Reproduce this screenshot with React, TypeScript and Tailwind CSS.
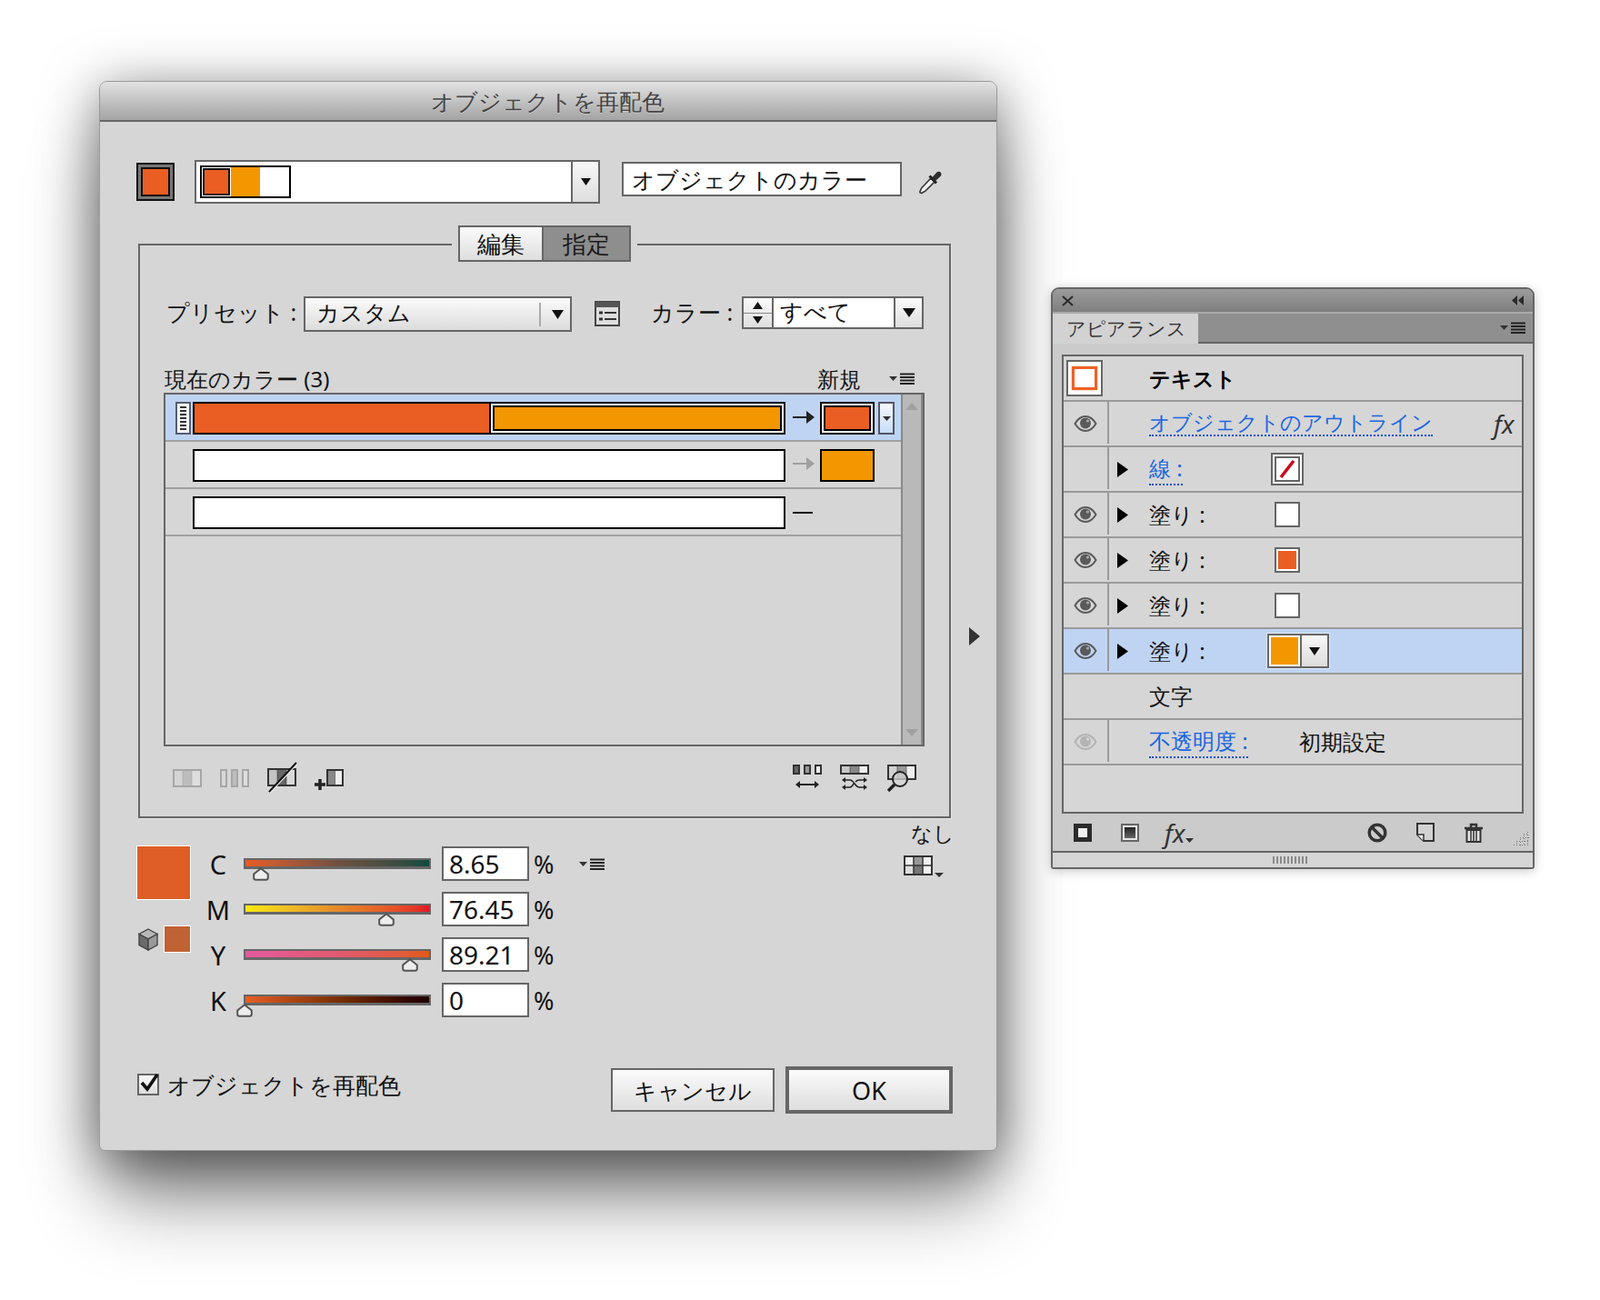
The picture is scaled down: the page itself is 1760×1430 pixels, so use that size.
import React from 'react'

const ORANGE = '#ea5e23'
const AMBER = '#f39700'

function Tri({ dir = 'down', w = 14, h = 10, color = '#111' }: { dir?: string; w?: number; h?: number; color?: string }) {
  const pts =
    dir === 'down' ? `0,0 ${w},0 ${w / 2},${h}` :
    dir === 'up' ? `0,${h} ${w},${h} ${w / 2},0` :
    dir === 'left' ? `${w},0 ${w},${h} 0,${h / 2}` :
    `0,0 ${w},${h / 2} 0,${h}`
  return (
    <svg width={w} height={h} viewBox={`0 0 ${w} ${h}`} className="block shrink-0">
      <polygon points={pts} fill={color} />
    </svg>
  )
}

function MenuIcon({ className = '' }: { className?: string }) {
  return (
    <svg width="28" height="14" viewBox="0 0 28 14" className={`block shrink-0 ${className}`}>
      <polygon points="0,4 9,4 4.5,9" fill="#333" />
      <path d="M12 1.5H28M12 5H28M12 8.5H28M12 12H28" stroke="#222" strokeWidth="2" />
    </svg>
  )
}

function Eye({ faded = false }: { faded?: boolean }) {
  const c = faded ? '#b4b4b4' : '#5a5a5a'
  return (
    <svg width="26" height="20" viewBox="0 0 26 20" className="block">
      <path d="M1.5 10C5 4 9.5 2 13 2S21 4 24.5 10C21 16 16.5 18 13 18S5 16 1.5 10Z" fill="none" stroke={c} strokeWidth="2" />
      <circle cx="13" cy="9.5" r="6" fill={c} />
      <circle cx="15.5" cy="7" r="1.6" fill={faded ? '#d6d6d6' : '#a8a8a8'} />
    </svg>
  )
}

function Eyedropper() {
  return (
    <svg width="26" height="27" viewBox="0 0 26 27" className="block">
      <path d="M14 9L4 19.5C3 20.5 3 22 2 23.5C1.5 25 3 26 4.5 25C6 24 7 24 8 23L18 13Z" fill="#f2f2f2" stroke="#333" strokeWidth="1.6" />
      <path d="M12.5 6.5L20 14.5" stroke="#222" strokeWidth="3" />
      <path d="M15.5 8L20 3C21.5 1.2 24 1.5 25 3S25.5 6 24 7.5L19 12Z" fill="#2e2e2e" />
    </svg>
  )
}

function Cells({ x, y, w, h, fills, stroke = '#333' }: { x: number; y: number; w: number; h: number; fills: string[]; stroke?: string }) {
  const cw = w / fills.length
  return (
    <g>
      {fills.map((f, i) => (
        <rect key={i} x={x + i * cw} y={y} width={cw} height={h} fill={f} />
      ))}
      {fills.slice(1).map((_, i) => (
        <path key={i} d={`M${x + (i + 1) * cw} ${y}V${y + h}`} stroke={stroke} strokeWidth="1" opacity="0.6" />
      ))}
      <rect x={x} y={y} width={w} height={h} fill="none" stroke={stroke} strokeWidth="2" />
    </g>
  )
}

function ListIcon() {
  return (
    <svg width="28" height="28" viewBox="0 0 28 28" className="block shrink-0">
      <rect x="1" y="1" width="26" height="26" fill="#dedede" stroke="#444" strokeWidth="2" />
      <rect x="1" y="1" width="26" height="6" fill="#555" />
      <path d="M5 13H9M5 20H9" stroke="#333" strokeWidth="3" />
      <path d="M11 13H24M11 20H24" stroke="#333" strokeWidth="2" />
    </svg>
  )
}

function MergeOff() {
  return (
    <svg width="32" height="20" viewBox="0 0 32 20" className="block">
      <Cells x={1} y={1} w={30} h={18} fills={['#d4d4d4', '#bdbdbd', '#dedede']} stroke="#a6a6a6" />
    </svg>
  )
}

function SplitOff() {
  return (
    <svg width="32" height="20" viewBox="0 0 32 20" className="block">
      <rect x="1" y="1" width="6" height="18" fill="#d8d8d8" stroke="#a6a6a6" strokeWidth="2" />
      <rect x="13" y="1" width="6" height="18" fill="#bdbdbd" stroke="#a6a6a6" strokeWidth="2" />
      <rect x="25" y="1" width="6" height="18" fill="#dedede" stroke="#a6a6a6" strokeWidth="2" />
    </svg>
  )
}

function NoCells() {
  return (
    <svg width="34" height="34" viewBox="0 0 34 34" className="block">
      <Cells x={1} y={8} w={30} h={18} fills={['#c4c4c4', '#666', '#d8d8d8']} stroke="#333" />
      <path d="M32 1L2 33" stroke="#f4f4f4" strokeWidth="1.5" transform="translate(1 1)" />
      <path d="M32 1L2 33" stroke="#111" strokeWidth="2" />
    </svg>
  )
}

function AddCell() {
  return (
    <svg width="32" height="24" viewBox="0 0 32 24" className="block">
      <Cells x={14} y={1} w={17} h={17} fills={['#888', '#eee']} stroke="#333" />
      <path d="M6 11V23M0 17H12" stroke="#222" strokeWidth="3.5" />
    </svg>
  )
}

function ArrangeIcon() {
  return (
    <svg width="32" height="31" viewBox="0 0 32 31" className="block">
      <rect x="1" y="1" width="6" height="9" fill="#666" stroke="#333" strokeWidth="2" />
      <rect x="13" y="1" width="6" height="9" fill="#999" stroke="#333" strokeWidth="2" />
      <rect x="25" y="1" width="6" height="9" fill="#f0f0f0" stroke="#333" strokeWidth="2" />
      <path d="M6 22H26" stroke="#222" strokeWidth="2" />
      <polygon points="3,22 8,18 8,26" fill="#222" />
      <polygon points="29,22 24,18 24,26" fill="#222" />
    </svg>
  )
}

function ShuffleIcon() {
  return (
    <svg width="32" height="31" viewBox="0 0 32 31" className="block">
      <Cells x={1} y={1} w={30} h={9} fills={['#c8c8c8', '#888', '#eee']} stroke="#333" />
      <path d="M5 17H11C15 17 17 25 21 25H27M5 25H11C13 25 14 23 15 21M17 19C18 18 19 17 21 17H27" fill="none" stroke="#222" strokeWidth="1.6" />
      <polygon points="2,17 6,14 6,20" fill="#222" />
      <polygon points="2,25 6,22 6,28" fill="#222" />
      <polygon points="30,17 26,14 26,20" fill="#222" />
      <polygon points="30,25 26,22 26,28" fill="#222" />
    </svg>
  )
}

function FinderIcon() {
  return (
    <svg width="32" height="31" viewBox="0 0 32 31" className="block">
      <Cells x={1} y={1} w={30} h={15} fills={['#d0d0d0', '#999', '#eee']} stroke="#333" />
      <circle cx="14" cy="16" r="8" fill="#d6d6d6" fillOpacity="0.75" stroke="#222" strokeWidth="2" />
      <path d="M8 22L1 29" stroke="#222" strokeWidth="3.5" />
    </svg>
  )
}

function GridIcon() {
  return (
    <svg width="44" height="24" viewBox="0 0 44 24" className="block">
      <rect x="1" y="1" width="10" height="10" fill="#f0f0f0" />
      <rect x="11" y="1" width="10" height="10" fill="#999" />
      <rect x="21" y="1" width="10" height="10" fill="#f0f0f0" />
      <rect x="1" y="11" width="10" height="10" fill="#dedede" />
      <rect x="11" y="11" width="10" height="10" fill="#777" />
      <rect x="21" y="11" width="10" height="10" fill="#f0f0f0" />
      <path d="M1 11H31M11 1V21M21 1V21" stroke="#333" strokeWidth="1.5" />
      <rect x="1" y="1" width="30" height="20" fill="none" stroke="#333" strokeWidth="2" />
      <polygon points="34,19 44,19 39,24" fill="#333" />
    </svg>
  )
}

function Cube() {
  return (
    <svg width="22" height="25" viewBox="0 0 22 25" className="block">
      <polygon points="11,1 21,6.5 11,12 1,6.5" fill="#b8b8b8" stroke="#444" strokeWidth="1.4" />
      <polygon points="1,6.5 11,12 11,24 1,18.5" fill="#6a6a6a" stroke="#444" strokeWidth="1.4" />
      <polygon points="21,6.5 11,12 11,24 21,18.5" fill="#9a9a9a" stroke="#444" strokeWidth="1.4" />
    </svg>
  )
}

function Thumb({ left }: { left: string }) {
  return (
    <svg width="18" height="15" viewBox="0 0 18 15" className={`absolute top-[8px] ${left}`}>
      <path d="M9 1.2L16.8 7.5V11.5C16.8 13 16 13.8 14.5 13.8H3.5C2 13.8 1.2 13 1.2 11.5V7.5Z" fill="#eeeeee" stroke="#555" strokeWidth="2" />
    </svg>
  )
}

function SliderRow({ label, value, gradient, thumb }: { label: string; value: string; gradient: string; thumb: string }) {
  return (
    <div className="flex h-[38px] items-start">
      <div className="flex h-[38px] w-[40px] items-center justify-center text-[29px] leading-none text-[#111]">{label}</div>
      <div className="relative ml-[8px] mt-[13px] h-[12px] w-[206px] border-2 border-b-[3px] border-[#666]">
        <div className={`h-full w-full ${gradient}`} />
        <Thumb left={thumb} />
      </div>
      <div className="ml-[12px] flex h-[38px] w-[96px] items-center border-2 border-[#666] bg-white pl-[6px] text-[28px] leading-none text-[#111]">{value}</div>
      <div className="ml-[5px] flex h-[38px] items-center text-[27px] leading-none text-[#111]">%</div>
    </div>
  )
}

function Grip() {
  return (
    <div className="mr-[2px] flex h-[36px] w-[17px] flex-col items-center justify-center gap-[2px] border-2 border-[#555d70] bg-[#f2f5fb]">
      {[0, 1, 2, 3, 4, 5, 6].map((i) => (
        <div key={i} className="h-[2px] w-[7px] bg-[#333]" />
      ))}
    </div>
  )
}

function BarPair() {
  return (
    <div className="flex h-[36px] w-[652px] border-2 border-black">
      <div className="w-[324px]" style={{ background: ORANGE }} />
      <div className="w-[2px] bg-black" />
      <div className="flex-1 border-2 border-white">
        <div className="h-full border-2 border-black" style={{ background: AMBER }} />
      </div>
    </div>
  )
}

function ColorRows() {
  return (
    <div className="flex h-[385px] w-[809px] flex-col">
      <div className="flex h-[52px] items-start border-b-2 border-[#a0a0a0] bg-[#bfd4f3] pl-[11px] pt-[8px]">
        <Grip />
        <BarPair />
        <svg width="24" height="14" viewBox="0 0 24 14" className="ml-[8px] mt-[10px] block shrink-0">
          <path d="M0 7H17" stroke="#222" strokeWidth="2" />
          <polygon points="15,0 24,7 15,14" fill="#222" />
        </svg>
        <div className="ml-[6px] h-[36px] w-[60px] border-2 border-black bg-white p-[2px]">
          <div className="h-full border-2 border-black" style={{ background: ORANGE }} />
        </div>
        <div className="ml-[4px] flex h-[36px] w-[18px] items-center justify-center border-2 border-[#556] bg-linear-to-b from-[#f6f9ff] to-[#c8dcf8]">
          <Tri w={9} h={5} color="#333" />
        </div>
      </div>
      <div className="flex h-[52px] items-start border-b-2 border-[#a0a0a0] pl-[30px] pt-[8px]">
        <div className="h-[36px] w-[652px] border-2 border-black bg-white" />
        <svg width="24" height="14" viewBox="0 0 24 14" className="ml-[8px] mt-[9px] block shrink-0">
          <path d="M0 7H17" stroke="#a0a0a0" strokeWidth="2" />
          <polygon points="15,0 24,7 15,14" fill="#a0a0a0" />
        </svg>
        <div className="ml-[6px] h-[36px] w-[60px] border-2 border-black" style={{ background: AMBER }} />
      </div>
      <div className="flex h-[52px] items-start border-b-2 border-[#a0a0a0] pl-[30px] pt-[8px]">
        <div className="h-[36px] w-[652px] border-2 border-black bg-white" />
        <div className="ml-[8px] mt-[17px] h-[2px] w-[22px] bg-[#111]" />
      </div>
    </div>
  )
}

function Dialog() {
  return (
    <div className="mt-[89px] flex h-[1177px] w-[988px] shrink-0 flex-col rounded-t-[9px] rounded-b-[6px] border border-[#9a9a9a] bg-[#d6d6d6] shadow-[0_10px_60px_rgba(0,0,0,0.5),0_62px_80px_-10px_rgba(0,0,0,0.45)]">
      <div className="flex h-[44px] shrink-0 items-center justify-center rounded-t-[8px] border-b-2 border-[#666] bg-linear-to-b from-[#e2e2e2] to-[#a4a4a4] pr-[2px] text-[25px] leading-none text-[#444] [text-shadow:0_1px_0_rgba(255,255,255,0.35)]">
        オブジェクトを再配色
      </div>

      {/* top row */}
      <div className="ml-[40px] mt-[42px] flex h-[48px] items-center">
        <div className="h-[42px] w-[42px] border-2 border-[#111] bg-[#777] p-[3px]">
          <div className="h-full border-2 border-[#111]" style={{ background: ORANGE }} />
        </div>
        <div className="ml-[22px] flex h-[48px] w-[446px] border-2 border-[#666]">
          <div className="flex-1 bg-white pl-[4px] pt-[4px]">
            <div className="flex h-[36px] w-[100px] border-2 border-black">
              <div className="w-[32px] bg-white p-[1px]">
                <div className="h-full border-2 border-[#111]" style={{ background: ORANGE }} />
              </div>
              <div className="w-[32px]" style={{ background: AMBER }} />
              <div className="flex-1 bg-white" />
            </div>
          </div>
          <div className="flex w-[30px] items-center justify-center border-l-2 border-[#666] bg-linear-to-b from-[#f8f8f8] to-[#dedede]">
            <Tri w={11} h={8} />
          </div>
        </div>
        <div className="ml-[24px] mt-[2px] flex h-[38px] w-[308px] items-center self-start border-2 border-[#666] bg-white pl-[9px] text-[25px] leading-none text-[#111]">
          オブジェクトのカラー
        </div>
        <div className="ml-[18px] mt-[11px] self-start">
          <Eyedropper />
        </div>
      </div>

      {/* group box */}
      <div className="ml-[42px] mt-[44px] flex shrink-0 items-start">
        <div className="relative h-[632px] w-[894px] shrink-0 border-2 border-[#666] shadow-[1px_1px_0_rgba(255,255,255,0.35)]">
          <div className="absolute left-[343px] top-[-22px] flex h-[42px] bg-[#d6d6d6] px-[7px]">
            <div className="flex h-[40px] w-[94px] items-center justify-center border-2 border-[#666] bg-linear-to-b from-[#fbfbfb] to-[#dedede] text-[26px] leading-none text-[#111]">編集</div>
            <div className="flex h-[40px] w-[96px] items-center justify-center border-2 border-l-0 border-[#666] bg-[#8e8e8e] text-[26px] leading-none text-[#1a1a1a]">指定</div>
          </div>

          <div className="ml-[29px] mt-[56px] flex h-[39px] items-start">
            <div className="flex h-[39px] w-[151px] shrink-0 items-center whitespace-nowrap pb-[5px] text-[25px] leading-none text-[#111]">プリセット :</div>
            <div className="flex h-[39px] w-[295px] items-center border-2 border-[#666] bg-linear-to-b from-[#fbfbfb] to-[#dcdcdc] pl-[12px] text-[25px] leading-none text-[#111]">
              <span className="w-[245px] pb-[5px]">カスタム</span>
              <div className="h-[26px] w-[2px] bg-[#aaa]" />
              <div className="ml-[12px]"><Tri w={13} h={10} /></div>
            </div>
            <div className="ml-[25px] mt-[5px]"><ListIcon /></div>
            <div className="ml-[34px] flex h-[39px] w-[100px] shrink-0 items-center whitespace-nowrap pb-[5px] text-[25px] leading-none text-[#111]">カラー :</div>
            <div className="flex h-[36px] w-[200px] border-2 border-[#666] bg-white">
              <div className="flex w-[33px] flex-col border-r-2 border-[#666] bg-linear-to-b from-[#fafafa] to-[#dedede]">
                <div className="flex flex-1 items-center justify-center border-b border-[#888]"><Tri dir="up" w={11} h={8} /></div>
                <div className="flex flex-1 items-center justify-center"><Tri w={11} h={8} /></div>
              </div>
              <div className="flex flex-1 items-center pb-[4px] pl-[7px] text-[25px] leading-none text-[#111]">すべて</div>
              <div className="flex w-[31px] items-center justify-center border-l-2 border-[#666] bg-linear-to-b from-[#fafafa] to-[#dedede]"><Tri w={14} h={10} /></div>
            </div>
          </div>

          <div className="ml-[26px] mt-[36px] flex h-[31px] w-[837px] items-center whitespace-nowrap text-[24px] leading-none text-[#111]">
            <span className="ml-[1px] w-[718px] shrink-0">現在のカラー (3)</span>
            <span className="shrink-0">新規</span>
            <MenuIcon className="ml-[31px]" />
          </div>

          <div className="ml-[26px] flex h-[389px] w-[837px] border-2 border-[#666]">
            <ColorRows />
            <div className="flex w-[24px] flex-col items-center justify-between border-x-2 border-[#8a8a8a] bg-[#b9b9b9] py-[9px]">
              <Tri dir="up" w={14} h={8} color="#a0a0a0" />
              <Tri w={14} h={8} color="#a0a0a0" />
            </div>
          </div>

          <div className="ml-[36px] mt-[18px] flex h-[34px] w-[818px] items-center">
            <MergeOff />
            <div className="ml-[20px]"><SplitOff /></div>
            <div className="mb-[2px] ml-[20px]"><NoCells /></div>
            <div className="ml-[18px] mt-[4px]"><AddCell /></div>
            <div className="ml-auto flex gap-[20px]">
              <ArrangeIcon />
              <ShuffleIcon />
              <FinderIcon />
            </div>
          </div>
        </div>
        {/* side arrow that opens the colour wheel */}
        <div className="ml-[20px] mt-[422px]">
          <Tri dir="right" w={12} h={20} color="#333" />
        </div>
      </div>

      {/* colour sliders */}
      <div className="flex h-[223px] items-start">
        <div className="ml-[40px] mt-[30px] flex w-[60px] shrink-0 flex-col">
          <div className="h-[60px] w-[60px] border border-white bg-[#df5e26]" />
          <div className="mt-[28px] flex items-center justify-between">
            <div className="ml-[2px]"><Cube /></div>
            <div className="h-[30px] w-[30px] border border-white bg-[#c06234]" />
          </div>
        </div>
        <div className="ml-[10px] mt-[31px] flex flex-col gap-[12px]">
          <SliderRow label="C" value="8.65" gradient="bg-linear-to-r from-[#ea5c22] via-[#705040] to-[#0d4a40]" thumb="left-[8px]" />
          <SliderRow label="M" value="76.45" gradient="bg-linear-to-r from-[#f6ea0c] via-[#e58a2a] to-[#e31626]" thumb="left-[146px]" />
          <SliderRow label="Y" value="89.21" gradient="bg-linear-to-r from-[#e35a9c] via-[#e25a70] to-[#e2590f]" thumb="left-[172px]" />
          <SliderRow label="K" value="0" gradient="bg-linear-to-r from-[#e85f26] via-[#7a3000] to-[#1e0000]" thumb="left-[-10px]" />
        </div>
        <MenuIcon className="ml-[28px] mt-[44px]" />
        <div className="ml-[337px] mt-[4px] flex w-[52px] flex-col">
          <div className="flex h-[24px] items-center whitespace-nowrap text-[23px] leading-none text-[#111]">なし</div>
          <div className="ml-[-8px] mt-[13px]"><GridIcon /></div>
        </div>
      </div>

      {/* bottom row */}
      <div className="ml-[41px] mt-[50px] flex h-[52px] items-start">
        <div className="mt-[8px] flex h-[24px] w-[521px] items-center">
          <div className="relative h-[24px] w-[24px] border-2 border-[#666] bg-linear-to-b from-[#fafafa] to-[#dcdcdc]">
            <svg width="24" height="24" viewBox="0 0 24 24" className="absolute left-[-1px] top-[-3px]">
              <path d="M4 11L10 18L21 2" fill="none" stroke="#111" strokeWidth="3.6" />
            </svg>
          </div>
          <span className="ml-[9px] whitespace-nowrap text-[25px] leading-none text-[#111]">オブジェクトを再配色</span>
        </div>
        <div className="mt-[2px] flex h-[48px] w-[180px] items-center justify-center border-2 border-[#666] bg-linear-to-b from-[#fbfbfb] to-[#dedede] text-[25px] leading-none text-[#111]">キャンセル</div>
        <div className="ml-[12px] flex h-[52px] w-[184px] items-center justify-center border-4 border-[#666] bg-linear-to-b from-[#fbfbfb] to-[#dedede] text-[27px] leading-none text-[#111]">OK</div>
      </div>
    </div>
  )
}

function Swatch({ fill }: { fill?: string }) {
  return (
    <div className="h-[28px] w-[28px] border-2 border-[#666] bg-white p-[2px]">
      <div className="h-full w-full" style={fill ? { background: fill } : undefined} />
    </div>
  )
}

function PanelRow({ eye = true, tri = true, selected = false, faded = false, children }: { eye?: boolean; tri?: boolean; selected?: boolean; faded?: boolean; children: React.ReactNode }) {
  return (
    <div className={`flex h-[50px] items-center border-b-2 border-[#9a9a9a] ${selected ? 'bg-[#bfd4f3]' : ''}`}>
      <div className="flex h-full w-[48px] items-center justify-center">{eye && <Eye faded={faded} />}</div>
      <div className="h-[46px] w-[2px] self-start bg-[#9a9a9a]" />
      <div className="flex w-[44px] items-center pl-[9px]">{tri && <Tri dir="right" w={12} h={17} color="#000" />}</div>
      {children}
    </div>
  )
}

function Nuri({ children }: { children: React.ReactNode }) {
  return (
    <>
      <div className="w-[138px] shrink-0 text-[24px] leading-none text-[#111]">塗り :</div>
      {children}
    </>
  )
}

function Panel() {
  return (
    <div className="ml-[59px] mt-[316px] flex h-[640px] w-[532px] shrink-0 flex-col rounded-t-[9px] rounded-b-[3px] border-2 border-[#666] bg-[#cbcbcb] shadow-[0_2px_12px_rgba(0,0,0,0.22)]">
      <div className="flex h-[25px] shrink-0 items-center justify-between rounded-t-[7px] bg-linear-to-b from-[#9c9c9c] to-[#7f7f7f] px-[10px]">
        <svg width="13" height="12" viewBox="0 0 13 12" className="block">
          <path d="M1 1L12 11M12 1L1 11" stroke="#2b2b2b" strokeWidth="2" />
        </svg>
        <div className="flex gap-[1px]">
          <Tri dir="left" w={6} h={11} color="#2b2b2b" />
          <Tri dir="left" w={6} h={11} color="#2b2b2b" />
        </div>
      </div>
      <div className="flex h-[35px] shrink-0 border-t-2 border-[#aaa]">
        <div className="flex w-[160px] items-center whitespace-nowrap bg-[#d2d2d2] pl-[15px] text-[21px] leading-none text-[#333]">アピアランス</div>
        <div className="flex flex-1 items-center justify-end border-b-2 border-[#666] bg-[#8f8f8f] pr-[8px]">
          <MenuIcon />
        </div>
      </div>

      <div className="ml-[10px] mt-[12px] h-[505px] w-[508px] shrink-0 border-2 border-[#666] bg-[#d6d6d6]">
        <div className="flex h-[50px] items-center border-b-2 border-[#9a9a9a]">
          <div className="ml-[3px] flex h-[40px] w-[40px] items-center justify-center border-2 border-[#666] bg-white">
            <div className="h-[26px] w-[28px] border-[3px] border-[#ec6226] bg-white shadow-[0_0_2px_#f0a070]" />
          </div>
          <span className="ml-[51px] whitespace-nowrap text-[23px] font-bold leading-none text-black">テキスト</span>
        </div>
        <PanelRow tri={false}>
          <span className="shrink-0 whitespace-nowrap border-b-2 border-dotted border-[#0a50d8] pb-[2px] text-[23px] leading-none text-[#1a66e0]">オブジェクトのアウトライン</span>
          <span className="ml-[67px] shrink-0 font-['Liberation_Serif',serif] text-[28px] italic leading-none text-[#333]">fx</span>
        </PanelRow>
        <PanelRow eye={false}>
          <div className="w-[134px] shrink-0">
            <span className="border-b-2 border-dotted border-[#0a50d8] pb-[1px] text-[24px] leading-none text-[#1a66e0]">線 :</span>
          </div>
          <div className="h-[36px] w-[36px] border-2 border-[#666] bg-white p-[2px]">
            <div className="h-full border-2 border-[#666] bg-white">
              <svg width="24" height="24" viewBox="0 0 24 24" className="block">
                <path d="M5 21L19 3" stroke="#cc0a1e" strokeWidth="3.6" />
              </svg>
            </div>
          </div>
        </PanelRow>
        <PanelRow><Nuri><Swatch /></Nuri></PanelRow>
        <PanelRow><Nuri><Swatch fill={ORANGE} /></Nuri></PanelRow>
        <PanelRow><Nuri><Swatch /></Nuri></PanelRow>
        <PanelRow selected>
          <div className="w-[130px] shrink-0 text-[24px] leading-none text-[#111]">塗り :</div>
          <div className="flex h-[38px] border-2 border-[#666] shadow-[0_0_0_1px_rgba(255,255,255,0.5)]">
            <div className="h-full w-[34px] border-2 border-white" style={{ background: AMBER }} />
            <div className="flex w-[30px] items-center justify-center border-l-2 border-[#666] bg-linear-to-b from-[#f8f8f8] to-[#dcdcdc]">
              <Tri w={12} h={9} />
            </div>
          </div>
        </PanelRow>
        <div className="flex h-[50px] items-center border-b-2 border-[#9a9a9a] pl-[94px] text-[24px] leading-none text-[#111]">文字</div>
        <PanelRow tri={false} faded>
          <div className="w-[165px] shrink-0">
            <span className="border-b-2 border-dotted border-[#0a50d8] pb-[1px] text-[24px] leading-none text-[#1a66e0]">不透明度 :</span>
          </div>
          <span className="text-[24px] leading-none text-[#111]">初期設定</span>
        </PanelRow>
      </div>

      <div className="flex h-[41px] shrink-0 items-center pl-[23px]">
        <div className="h-[20px] w-[20px] border-[5px] border-[#2b2b2b] bg-[#f0f0f0]" />
        <div className="ml-[32px] h-[20px] w-[20px] border-2 border-[#666] bg-[#e6e6e6] p-[2px]">
          <div className="h-full bg-linear-to-b from-[#222] to-[#666]" />
        </div>
        <div className="ml-[28px] flex w-[34px] items-end">
          <span className="font-['Liberation_Serif',serif] text-[28px] italic leading-none text-[#333]">fx</span>
          <div className="mb-[3px] ml-[1px]"><Tri w={9} h={5} color="#333" /></div>
        </div>
        <svg width="22" height="22" viewBox="0 0 22 22" className="ml-[189px] block">
          <circle cx="11" cy="11" r="8.8" fill="none" stroke="#333" strokeWidth="3.5" />
          <path d="M5 5L17 17" stroke="#333" strokeWidth="3.5" />
        </svg>
        <svg width="20" height="21" viewBox="0 0 20 21" className="ml-[32px] block">
          <path d="M1 1H19V20H8L1 13Z" fill="#d2d2d2" stroke="#333" strokeWidth="2" />
          <path d="M1 13H8V20" fill="#eee" stroke="#333" strokeWidth="1.5" />
        </svg>
        <svg width="22" height="22" viewBox="0 0 22 22" className="ml-[32px] block">
          <path d="M1 6H21M8 5V2H14V5" fill="none" stroke="#333" strokeWidth="2.5" />
          <path d="M3.5 8H18.5V21H3.5Z" fill="#e4e4e4" stroke="#333" strokeWidth="2" />
          <path d="M8 9V20M11 9V20M14 9V20" stroke="#333" strokeWidth="1.5" />
        </svg>
        <svg width="18" height="18" viewBox="0 0 18 18" className="ml-[32px] mt-[12px] block">
          <path d="M16.5 2V17M12.5 6V17M8.5 10V17M4.5 14V17M1 16.5H18M4 12.5H18M8 8.5H18M12 4.5H18" stroke="#777" strokeWidth="1" strokeDasharray="1 2" fill="none" />
        </svg>
      </div>

      <div className="flex flex-1 items-center justify-center border-t-2 border-[#666] bg-[#d6d6d6] pr-[6px]">
        <svg width="38" height="8" viewBox="0 0 38 8" className="block">
          <path d="M1 0V8M5 0V8M9 0V8M13 0V8M17 0V8M21 0V8M25 0V8M29 0V8M33 0V8M37 0V8" stroke="#8a8a8a" strokeWidth="2" />
        </svg>
      </div>
    </div>
  )
}

export default function App() {
  return (
    <div className="flex h-[1430px] w-[1760px] items-start overflow-hidden bg-white pl-[109px] font-['Liberation_Sans','Noto_Sans_CJK_JP',sans-serif]">
      <Dialog />
      <Panel />
    </div>
  )
}
